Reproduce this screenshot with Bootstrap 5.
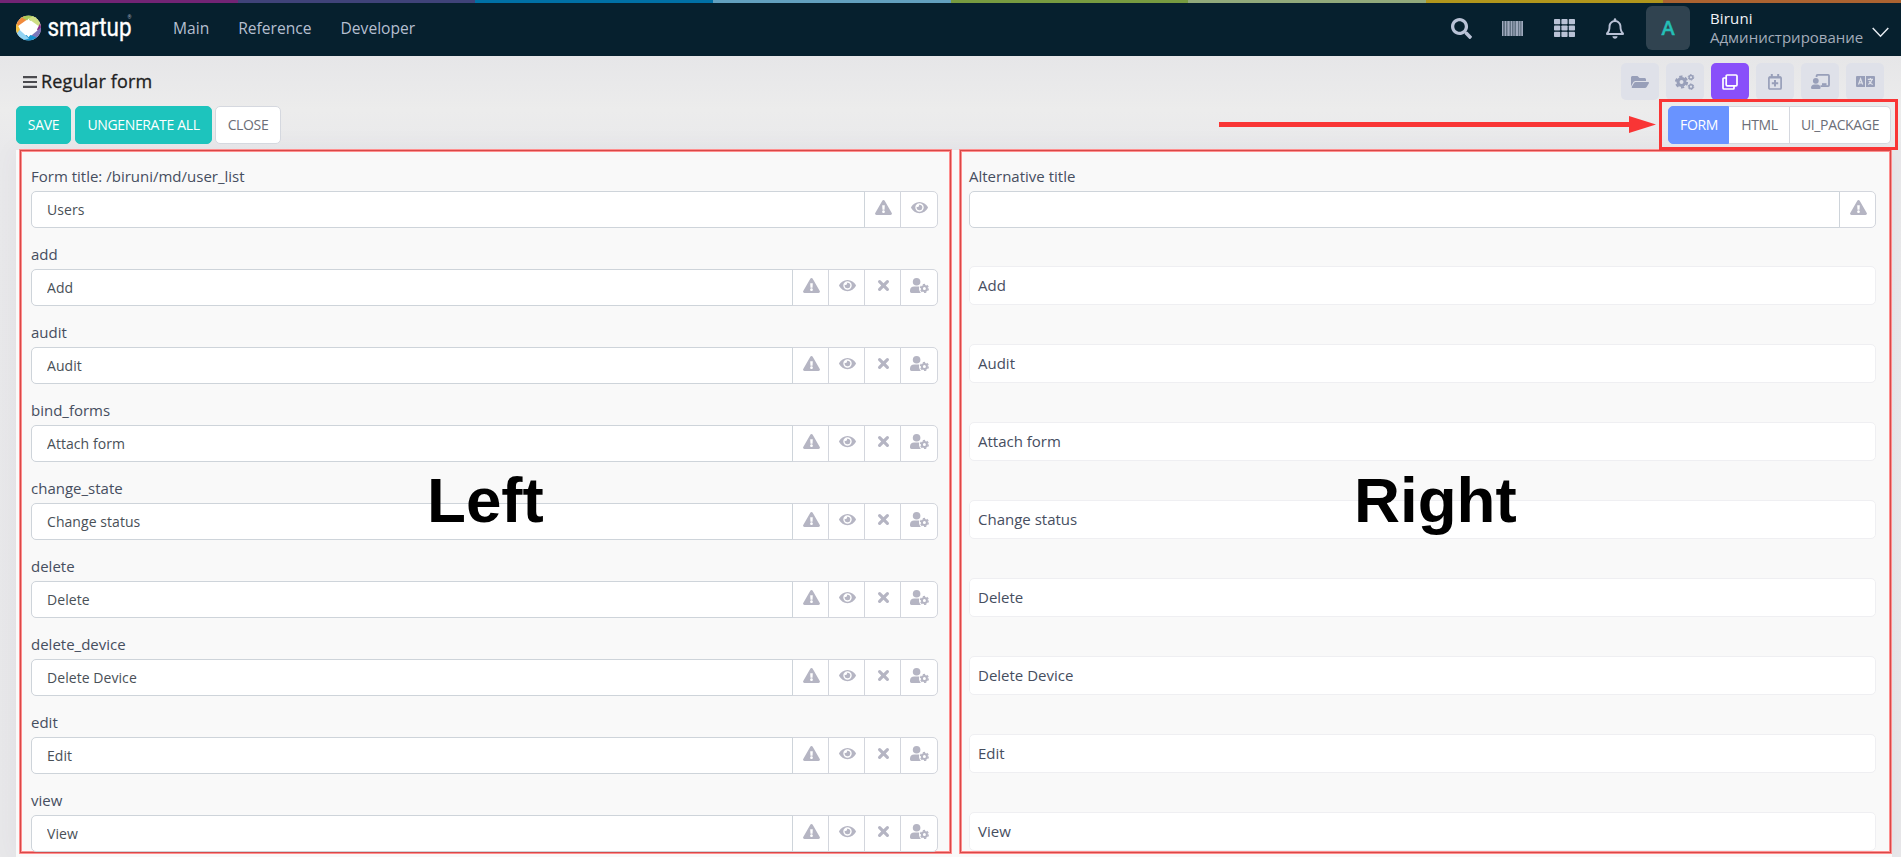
<!DOCTYPE html>
<html lang="en">
<head>
<meta charset="utf-8">
<meta name="viewport" content="width=device-width, initial-scale=1">
<title>Regular form</title>
<link href="https://cdn.jsdelivr.net/npm/bootstrap@5.3.0/dist/css/bootstrap.min.css" rel="stylesheet">
<style>
  body { font-family: "Open Sans", "Noto Sans", sans-serif; font-size: 14px; color: #464e5f; height: 857px; overflow: hidden;
    background: linear-gradient(#e6e6e8 56px, #ececec 110px, #e9e9eb 150px, #e8e8ea); }
  svg { display: block; fill: currentColor; }
  .stripe { height: 3px; }
  .stripe > i { flex: 1; }
  .topbar { height: 53px; background: #06202e; padding: 0 12px 3px 16px; }
  .topbar .nav-link { font-size: 15.6px; color: #b5bfd0; padding: 0; margin-right: 29px; line-height: 24px; }
  .tool { width: 51.3px; color: #b9c2d6; }
  .avatar { width: 44px; height: 44px; border-radius: 6px; background: #304350; color: #25beb6; font-size: 20px; font-weight: 600; margin-left: 5px; -webkit-text-stroke: .4px currentColor; }
  .who { margin-left: 20px; width: 154px; font-size: 15px; line-height: 19px; color: #a3acba; white-space: nowrap; }
  .who b { font-weight: 500; color: #f0f3f7; letter-spacing: .15px; }
  .titlebar { height: 50px; padding: 7px 17px 0 23px; }
  .titlebar h1 { font-size: 18px; font-weight: 500; color: #212121; margin: 0 0 0 4px; line-height: 24px; letter-spacing: .15px; -webkit-text-stroke: .3px currentColor; }
  .burger { color: #4b4b4f; margin-top: 7px; }
  .sq { width: 38px; height: 37px; border-radius: 5px; background: #dfe1e9; color: #989fb9; }
  .sq.on { background: #894ffa; color: #fff; }
  .actions { height: 44px; padding: 0 10px 0 16px; position: relative; }
  .actions .btn { height: 38px; font-size: 14px; padding: 0; line-height: 36px; border-radius: 5px; letter-spacing: -.35px; }
  .b-teal { background: #1dc4bd; border-color: #1dc4bd; color: #fff; }
  .b-line, .b-line:hover { background: #fff; border-color: #d5d8df; color: #6c6e77; }
  .b-blue { background: #6993ff; border-color: #6993ff; color: #fff; }
  .seg .btn + .btn { border-top-left-radius: 0; border-bottom-left-radius: 0; }
  .seg .btn:not(:last-child) { border-top-right-radius: 0; border-bottom-right-radius: 0; }
  .seg .btn:not(:last-child) { padding-left: 1px; }
  .seg-mark { position: absolute; left: 1659px; top: -7px; width: 239px; height: 51px; border: 3px solid #f93535; z-index: 3; }
  .arrow-mark { position: absolute; left: 1219px; top: 10px; z-index: 3; }
  .sheet { margin: 0 9px 0 16px; height: 707px; padding-left: 3px; background: #f9f9f9; gap: 7px; box-shadow: 0 0 24px rgba(82,63,105,.06); }
  .pane { position: relative; height: 703px; border: 1px solid #d84848; box-shadow: 0 0 0 1px #ff8f8f, inset 0 0 0 1px #ff8f8f; padding: 14px 12px 0 10px; overflow: hidden; }
  .pane-l { width: 931px; margin-left: 1px; }
  .pane-r { width: 931px; margin-left: 2px; padding-left: 8px; padding-right: 14px; }
  .field { height: 78px; }
  .field label { display: block; font-size: 15px; line-height: 22px; height: 26px; }
  .field .input-group { height: 37px; flex-wrap: nowrap; }
  .field .form-control { height: 37px; font-size: 14px; letter-spacing: .06px; color: #495057; border: 1px solid #ced4da; border-radius: 5px; padding: 0 15px; }
  .field .input-group-text { width: 37px; height: 37px; padding: 0 0 4px 1px; justify-content: center; background: #fff; border: 1px solid #d3d6dd; border-radius: 5px; color: #b5b5c3; }
  .field .input-group-text:last-child { width: 38px; }
  .pane-r .input-group-text:last-child { width: 37px; }
  .plain { height: 39px; margin-top: 23px; background: #fff; border: 1px solid #efeff2; border-radius: 5px; padding: 0 8px; font-size: 15px; line-height: 36px; }
  .word { position: absolute; font: bold 63.7px/66px "Liberation Sans", Arial, sans-serif; color: #000; }
</style>
</head>
<body>
<svg width="0" height="0" class="position-absolute">
  <symbol id="warn" viewBox="0 0 576 512"><path d="M569.517 440.013C587.975 472.007 564.806 512 527.94 512H48.054c-36.937 0-59.999-40.055-41.577-71.987L246.423 23.985c18.467-32.009 64.72-31.951 83.154 0l239.94 416.028zM288 354c-25.405 0-46 20.595-46 46s20.595 46 46 46 46-20.595 46-46-20.595-46-46-46zm-43.673-165.346l7.418 136c.347 6.364 5.609 11.346 11.982 11.346h48.546c6.373 0 11.635-4.982 11.982-11.346l7.418-136c.375-6.874-5.098-12.654-11.982-12.654h-63.383c-6.884 0-12.356 5.78-11.981 12.654z"/></symbol>
  <symbol id="eye" viewBox="0 0 576 512"><path d="M572.52 241.4C518.29 135.59 410.93 64 288 64S57.68 135.64 3.48 241.41a32.35 32.35 0 0 0 0 29.19C57.71 376.41 165.07 448 288 448s230.32-71.64 284.52-177.41a32.35 32.35 0 0 0 0-29.19zM288 400a144 144 0 1 1 144-144 143.93 143.93 0 0 1-144 144zm0-240a95.31 95.31 0 0 0-25.31 3.79 47.85 47.85 0 0 1-66.9 66.9A95.78 95.78 0 1 0 288 160z"/></symbol>
  <symbol id="cross" viewBox="0 0 17 15"><path d="M4.600 3.600l7.800 7.800m0-7.800l-7.800 7.800" stroke="currentColor" stroke-width="3.200" stroke-linecap="round" fill="none"/></symbol>
  <symbol id="usercog" viewBox="0 0 19 15"><circle cx="6.600" cy="3.800" r="3.800"/><path d="M4 8.500h5.300c-.6 1.800-.3 4.400 1.500 6.500H1.400A1.400 1.400 0 0 1 0 13.600v-1.200C0 10.200 1.800 8.500 4 8.500z"/><circle cx="14.400" cy="10.400" r="2.500" fill="none" stroke="currentColor" stroke-width="2"/><circle cx="14.400" cy="10.400" r="3.900" fill="none" stroke="currentColor" stroke-width="1.300" stroke-dasharray="2.300 1.784"/></symbol>
</svg>

<div class="stripe d-flex">
  <i style="background:#722475"></i><i style="background:#3f4379"></i><i style="background:#0070a5"></i><i style="background:#62a0bf"></i><i style="background:#779b40"></i><i style="background:#91a97b"></i><i style="background:#b0961c"></i><i style="background:#ab6331"></i>
</div>

<header class="topbar d-flex align-items-center">
  <svg width="157" height="40" viewBox="0 0 157 40" class="flex-shrink-0">
    <defs><clipPath id="disc"><circle cx="12.500" cy="20" r="12.500"/></clipPath></defs>
    <g clip-path="url(#disc)"><g transform="translate(0 1.500)">
      <rect y="6" width="25" height="25" fill="#fff"/>
      <path d="M0 18V10L8 6l6 2z" fill="#f08a3c"/><path d="M6 8Q12 3 20 8l-7 4z" fill="#a9c95b"/>
      <path d="M12 9L19 6l7 6v7z" fill="#cfdf85"/><path d="M25 12v13l-4-5z" fill="#8b2f8c"/>
      <path d="M25 18v8l-8 4-4-2z" fill="#7b77b8"/><path d="M5 27l8-2 8 3-3 4H7z" fill="#1a94cf"/>
      <path d="M0 17v9l6 5 7-2z" fill="#92d3f3"/><path d="M0 12v13l4-5z" fill="#f5c13d"/>
      <path d="M12.500 10.500Q15.500 14.500 20 18.500 15.500 22.500 12.500 26.500 9.500 22.500 5 18.500 9.500 14.500 12.500 10.500z" fill="#fff" stroke="#fff" stroke-width="1.500"/>
    </g></g>
    <text x="31.500" y="27.500" font-family="Roboto, sans-serif" font-size="26" fill="#fff" stroke="#fff" stroke-width=".3" textLength="84" lengthAdjust="spacingAndGlyphs">smartup</text>
    <text x="111.500" y="11" font-family="Roboto, sans-serif" font-size="5" fill="#a3acba">®</text>
  </svg>
  <nav class="nav flex-grow-1">
    <a class="nav-link" href="#">Main</a><a class="nav-link" href="#">Reference</a><a class="nav-link" href="#">Developer</a>
  </nav>
  <div class="tool d-flex justify-content-center"><svg width="21" height="21" viewBox="0 0 512 512"><path d="M505 442.700L405.300 343c-4.500-4.500-10.600-7-17-7H372c27.600-35.300 44-79.700 44-128C416 93.100 322.900 0 208 0S0 93.100 0 208s93.100 208 208 208c48.300 0 92.700-16.400 128-44v16.300c0 6.400 2.500 12.500 7 17l99.700 99.700c9.400 9.400 24.600 9.400 33.900 0l28.300-28.300c9.400-9.400 9.400-24.600.1-34zM208 336c-70.700 0-128-57.200-128-128 0-70.700 57.200-128 128-128 70.700 0 128 57.200 128 128 0 70.700-57.200 128-128 128z"/></svg></div>
  <div class="tool d-flex justify-content-center"><svg width="21" height="15" viewBox="0 0 21 15"><path opacity=".5" d="M0 0h21v15H0z"/><path opacity=".7" d="M0 0h1v15H0zM3 0h1v15H3zM5.500 0h2v15h-2zM9 0h1v15H9zM11.500 0h1v15h-1zM14 0h2v15h-2zM17.200 0h1v15h-1zM19.500 0H21v15h-1.500z"/></svg></div>
  <div class="tool d-flex justify-content-center"><svg width="21" height="18" viewBox="0 0 21 18"><g id="g3"><rect width="6.200" height="5.200" rx=".8"/><rect x="7.400" width="6.200" height="5.200" rx=".8"/><rect x="14.800" width="6.200" height="5.200" rx=".8"/></g><use href="#g3" y="6.400"/><use href="#g3" y="12.800"/></svg></div>
  <div class="tool d-flex justify-content-center"><svg width="18" height="21" viewBox="0 0 448 512"><path d="M439.390 362.290c-19.320-20.760-55.470-51.990-55.470-154.290 0-77.700-54.480-139.900-127.940-155.160V32c0-17.670-14.320-32-31.980-32s-31.980 14.330-31.980 32v20.840C118.560 68.100 64.080 130.300 64.080 208c0 102.300-36.150 133.530-55.470 154.290-6 6.450-8.660 14.160-8.610 21.710.11 16.400 12.980 32 32.100 32h383.800c19.120 0 32-15.600 32.100-32 .05-7.550-2.610-15.270-8.610-21.710zM67.530 368c21.220-27.970 44.420-74.330 44.530-159.420 0-.2-.06-.38-.06-.58 0-61.860 50.140-112 112-112s112 50.140 112 112c0 .2-.06.38-.06.58.11 85.100 23.310 131.460 44.530 159.420H67.530zM224 512c35.320 0 63.970-28.650 63.970-64H160.030c0 35.350 28.650 64 63.970 64z"/></svg></div>
  <div class="avatar d-flex align-items-center justify-content-center">A</div>
  <div class="who"><b class="d-block">Biruni</b>Администрирование</div>
  <svg class="ms-2 mt-2" width="17" height="11" viewBox="0 0 17 11"><path d="M.7 1l7.800 8.200L16.300 1" fill="none" stroke="#e6ebf1" stroke-width="1.500"/></svg>
</header>

<div class="titlebar d-flex justify-content-between">
  <div class="d-flex align-items-start" style="padding-top:6px">
    <svg class="burger" width="14" height="12" viewBox="0 0 14 12"><path d="M0 0h14v2.200H0zM0 4.900h14v2.200H0zM0 9.800h14V12H0z"/></svg>
    <h1>Regular form</h1>
  </div>
  <div class="d-flex" style="gap:7px">
    <div class="sq d-flex align-items-center justify-content-center"><svg width="18" height="16" viewBox="0 0 576 512"><path d="M572.694 292.093L500.270 416.248A63.997 63.997 0 0 1 444.989 448H45.025c-18.523 0-30.064-20.093-20.731-36.093l72.424-124.155A64 64 0 0 1 152 256h399.964c18.523 0 30.064 20.093 20.730 36.093zM152 224h328v-48c0-26.510-21.490-48-48-48H272l-64-64H48C21.490 64 0 85.490 0 112v278.046l69.077-118.418C86.214 242.250 117.989 224 152 224z"/></svg></div>
    <div class="sq d-flex align-items-center justify-content-center"><svg width="20" height="16" viewBox="0 0 20 16" stroke="currentColor" style="fill:none"><circle cx="6.500" cy="8" r="3.500" stroke-width="3"/><circle cx="6.500" cy="8" r="5.500" stroke-width="2.200" stroke-dasharray="3.200 2.560"/><circle cx="16" cy="3.300" r="1.900" stroke-width="1.500"/><circle cx="16" cy="3.300" r="2.800" stroke-width="1" stroke-dasharray="1.600 1.332"/><circle cx="16" cy="12.700" r="1.900" stroke-width="1.500"/><circle cx="16" cy="12.700" r="2.800" stroke-width="1" stroke-dasharray="1.600 1.332"/></svg></div>
    <div class="sq on d-flex align-items-center justify-content-center"><svg width="16" height="16" viewBox="0 0 16 16" style="fill:none" stroke="currentColor" stroke-width="1.700" stroke-linejoin="round"><rect x="4.200" y="1" width="10.800" height="10.800" rx="1"/><path d="M4 4H1.800Q1 4 1 4.800V14q0 1 1 1h9.200q.8 0 .8-.8V12"/></svg></div>
    <div class="sq d-flex align-items-center justify-content-center"><svg width="14" height="16" viewBox="0 0 14 16" style="fill:none" stroke="currentColor" stroke-width="1.700"><rect x=".9" y="3" width="12.200" height="12" rx="1"/><path d="M1 3.500h12M3.800 0v3.500M10.200 0v3.500M7 6v6.400M3.800 9.200h6.400" stroke-width="2"/></svg></div>
    <div class="sq d-flex align-items-center justify-content-center"><svg width="19" height="15" viewBox="0 0 19 15"><circle cx="4.800" cy="6.800" r="2.900"/><path d="M3.500 10.400h2.600q3.400.2 3.500 3.300 0 1.300-1.200 1.300H1.200Q0 15 0 13.700q.1-3.100 3.500-3.300z"/><path d="M5.600 3V1.800q0-.9.9-.9h10.600q.9 0 .9.900v9.400q0 .9-.9.900H9.500" fill="none" stroke="currentColor" stroke-width="1.800"/><path d="M11 9.200h4.500v2.500H11z"/></svg></div>
    <div class="sq d-flex align-items-center justify-content-center"><svg width="19" height="11" viewBox="0 0 19 11"><path d="M1 0h8v11H1q-1 0-1-1V1q0-1 1-1zM10 0h8q1 0 1 1v9q0 1-1 1h-8z"/><path d="M2.500 8.500L4.600 2.700 6.700 8.500M3.300 6.800h2.600M11.800 3.300h5.200M14.400 2v1.300M16 3.500q-1 3.500-3.700 5M13 5q1.200 2.800 3.800 3.500" fill="none" stroke="#dfe1e9" stroke-width="1.200"/></svg></div>
  </div>
</div>

<div class="actions d-flex justify-content-between">
  <div class="d-flex">
    <button class="btn b-teal" style="width:55px">SAVE</button>
    <button class="btn b-teal" style="width:137px;margin-left:4px">UNGENERATE ALL</button>
    <button class="btn b-line" style="width:66px;margin-left:3px">CLOSE</button>
  </div>
  <div class="seg d-flex">
    <button class="btn b-blue" style="width:61px">FORM</button><button class="btn b-line border-start-0" style="width:61px">HTML</button><button class="btn b-line border-start-0" style="width:101px">UI_PACKAGE</button>
  </div>
  <div class="seg-mark"></div>
  <svg class="arrow-mark" width="437" height="17" viewBox="0 0 437 17"><path d="M0 6h410V0l27 8.500L410 17v-6H0z" fill="#f93535"/></svg>
</div>

<main class="sheet d-flex align-items-start">
  <section class="pane pane-l" id="left"><div class="word" style="left:406px;top:316px">Left</div></section>
  <section class="pane pane-r" id="right"><div class="word" style="left:393px;top:316px">Right</div></section>
</main>

<script src="https://cdn.jsdelivr.net/npm/bootstrap@5.3.0/dist/js/bootstrap.bundle.min.js"></script>
<script>
  const icon = (id, w = 17) => `<span class="input-group-text"><svg width="${w}" height="15"><use href="#${id}"/></svg></span>`;
  const field = (label, value, icons) => `<div class="field"><label>${label}</label><div class="input-group"><input class="form-control" value="${value}">${icons}</div></div>`;
  const rows = [["add", "Add"], ["audit", "Audit"], ["bind_forms", "Attach form"], ["change_state", "Change status"], ["delete", "Delete"], ["delete_device", "Delete Device"], ["edit", "Edit"], ["view", "View"]];
  const actions = icon("warn") + icon("eye") + icon("cross") + icon("usercog", 19);
  document.getElementById("left").insertAdjacentHTML("afterbegin",
    field("Form title: /biruni/md/user_list", "Users", icon("warn") + icon("eye")) + rows.map(r => field(r[0], r[1], actions)).join(""));
  document.getElementById("right").insertAdjacentHTML("afterbegin",
    field("Alternative title", "", icon("warn")) + rows.map(r => `<div class="field overflow-hidden"><div class="plain">${r[1]}</div></div>`).join(""));
</script>
</body>
</html>
